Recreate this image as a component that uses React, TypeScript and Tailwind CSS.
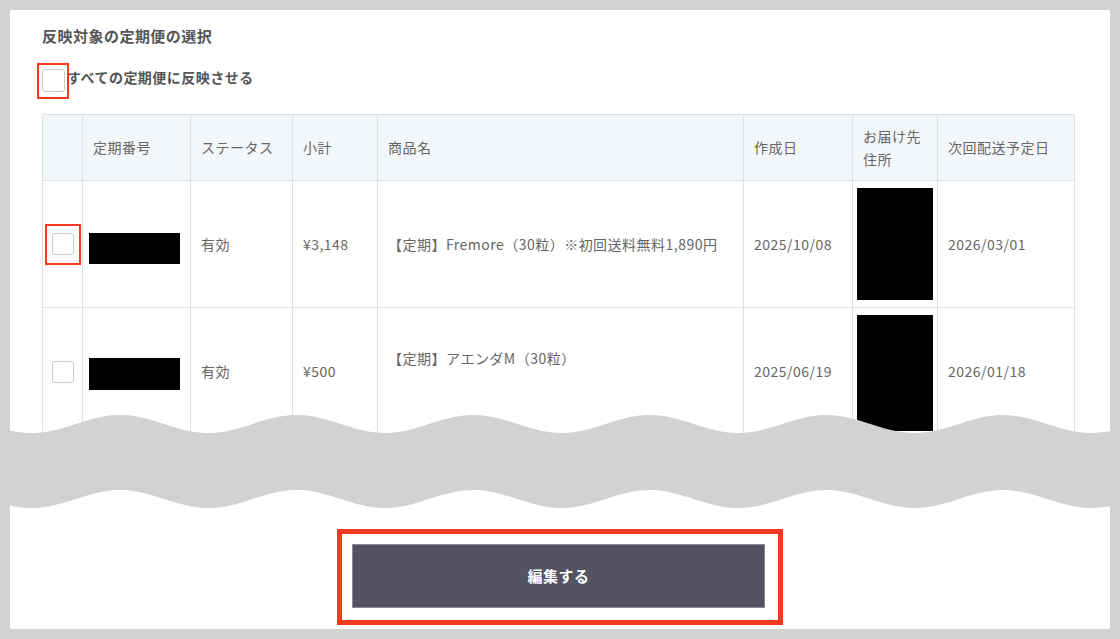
import React from "react";

const cols = "grid-cols-[40px_108px_102px_85px_366px_109px_85px_137px]";

function Checkbox({ size = 22 }: { size?: number }) {
  return (
    <span
      className={
        (size === 23 ? "w-[23px] h-[23px]" : "w-[22px] h-[22px]") +
        " block bg-white border border-[#c9c9c9] rounded-[3px] box-border"
      }
    />
  );
}

function wavePath() {
  const period = 176.6;
  const f = (x: number, mid: number) =>
    mid - 9 * Math.cos((2 * Math.PI * (x - 120)) / period);
  const top: string[] = [];
  const bot: string[] = [];
  for (let x = 0; x <= 1120; x += 4) {
    top.push(`${x},${f(x, 424).toFixed(2)}`);
  }
  for (let x = 1120; x >= 0; x -= 4) {
    bot.push(`${x},${f(x, 499).toFixed(2)}`);
  }
  return `M${top.join(" L")} L${bot.join(" L")} Z`;
}

export default function App() {
  const cell =
    "border-r border-b border-[#dde2e7] px-[10px] flex items-center box-border";
  const head = cell + " bg-[#f4f7fa]";
  return (
    <div className="relative w-[1120px] h-[639px] bg-[#d3d1d2] p-[10px] font-['Noto_Sans_CJK_JP',sans-serif] tracking-[0.03em] overflow-hidden">
      <div className="relative w-full h-full bg-white pl-[32px] pt-[15px]">
        <h2 className="text-[15px] leading-[22px] font-bold text-[#555]">
          反映対象の定期便の選択
        </h2>
        <div className="mt-[22px] flex items-start h-[23px]">
          <span className="relative">
            <Checkbox size={23} />
            <span className="absolute left-[-5px] top-[-6px] right-[-4px] bottom-[-7px] border-2 border-[#f5391c]" />
          </span>
          <span className="ml-[2px] text-[14px] leading-[16px] font-bold text-[#555]">
            すべての定期便に反映させる
          </span>
        </div>

        <div
          className={`mt-[22px] grid ${cols} grid-rows-[66px_127px_128px] w-[1032px] border-t border-l border-[#dde2e7] text-[14px] text-[#666]`}
        >
          <div className={head} />
          <div className={head}>定期番号</div>
          <div className={head}>ステータス</div>
          <div className={head}>小計</div>
          <div className={head}>商品名</div>
          <div className={head}>作成日</div>
          <div className={head + " leading-[23px]"}>お届け先住所</div>
          <div className={head}>次回配送予定日</div>

          <div className={cell + " justify-center !px-0"}>
            <span className="relative">
              <Checkbox />
              <span className="absolute left-[-7px] top-[-9px] right-[-7px] bottom-[-10px] border-2 border-[#f5391c]" />
            </span>
          </div>
          <div className={cell + " !pl-[6px] pt-[8px]"}>
            <span className="block w-[92px] h-[31px] bg-black" />
          </div>
          <div className={cell}>有効</div>
          <div className={cell}>¥3,148</div>
          <div className={cell + " whitespace-nowrap"}>
            【定期】Fremore（30粒）※初回送料無料1,890円
          </div>
          <div className={cell}>2025/10/08</div>
          <div className={cell + " !px-[4px] !items-start pt-[7px]"}>
            <span className="block w-[77px] h-[112px] bg-black" />
          </div>
          <div className={cell}>2026/03/01</div>

          <div className={cell + " justify-center !px-0"}>
            <Checkbox />
          </div>
          <div className={cell + " !pl-[6px] pt-[4px]"}>
            <span className="block w-[92px] h-[32px] bg-black" />
          </div>
          <div className={cell}>有効</div>
          <div className={cell}>¥500</div>
          <div className={cell + " leading-[28px]"}>
            <div>
              <div>【定期】アエンダM（30粒）</div>
              <div>&nbsp;</div>
            </div>
          </div>
          <div className={cell}>2025/06/19</div>
          <div className={cell + " !px-[4px] !items-start pt-[7px]"}>
            <span className="block w-[77px] h-[116px] bg-black" />
          </div>
          <div className={cell}>2026/01/18</div>
        </div>

        <div className="mt-[108px] flex">
          <div className="relative ml-[310px]">
            <button className="block w-[413px] h-[64px] bg-[#535262] border border-[#8a8996] text-white text-[15px] font-bold">
              編集する
            </button>
            <span className="absolute left-[-15px] top-[-15px] right-[-18px] bottom-[-17px] border-[5px] border-[#f5391c]" />
          </div>
        </div>
      </div>

      <svg
        className="absolute left-0 top-0 pointer-events-none"
        width="1120"
        height="639"
        viewBox="0 0 1120 639"
      >
        <path d={wavePath()} fill="#d3d1d2" />
      </svg>
    </div>
  );
}
